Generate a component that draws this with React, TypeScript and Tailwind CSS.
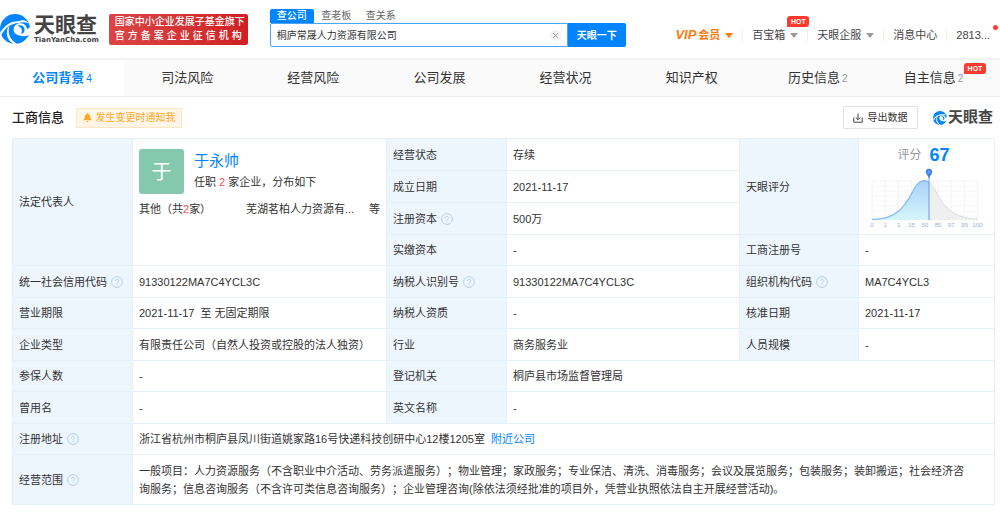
import React from 'react';
import { FaBell } from 'react-icons/fa';

const Swirl = ({ className }: { className: string }) => (
  <svg viewBox="0 0 30 30" className={className} aria-hidden="true">
    <circle cx="15" cy="15" r="15" fill="#0084ff" />
    {/* centre, open to the right */}
    <path d="M13.6 15.6 C13.6 11.4 17 8.8 21 9.2 C24.4 9.5 26.6 11.8 27 15 C28.4 14.6 29.4 13.8 30.4 12.4 L30.4 20 C28 22 24.6 22.8 21.4 22 C16.6 21.4 13.6 19.4 13.6 15.6 Z" fill="#fff" />
    <path d="M17.4 11.8 C21.4 10.4 24.6 12.4 24.6 16 C24.6 18.4 23 19.6 21 19.8 C22.6 18.2 22.6 13.4 17.4 11.8 Z" fill="#0084ff" />
    {/* outer sweeps */}
    <path d="M0 19 C4 11.6 10.4 7 18.4 7.2 C22.4 5.4 26.4 5.8 29 9.6 C25.4 7.8 21.8 8 18.6 9 C11.4 9.4 5 13.4 1.2 21.4 Z" fill="#fff" />
    <path d="M9.6 12.4 C7.2 18.6 9.6 25.6 17 30 L14.4 30.4 C7 26.4 5.4 19.4 8 13.6 Z" fill="#fff" />
  </svg>
);

const Help = () => (
  <svg viewBox="0 0 12 12" className="inline-block w-3 h-3 ml-1 align-[-2px]" fill="none" stroke="#a9ccec" aria-hidden="true">
    <circle cx="6" cy="6" r="5.4" strokeWidth="0.9" />
    <path d="M4.4 4.9 C4.4 2.6 7.6 2.7 7.6 4.7 C7.6 5.9 6 5.9 6 7.3 M6 8.3 V9.2" strokeWidth="0.9" />
  </svg>
);

const Caret = ({ className }: { className: string }) => (
  <svg viewBox="0 0 8 5" className={`w-2 h-[5px] ml-[5px] ${className}`} fill="currentColor" aria-hidden="true">
    <path d="M0 0 H8 L4 5 Z" />
  </svg>
);

const Hot = ({ className }: { className: string }) => (
  <span className={`absolute w-[22px] h-[11px] rounded-[3px] rounded-bl-none bg-[#ff3b30] text-white text-[7px] leading-[11px] font-bold text-center ${className}`}>
    HOT
  </span>
);

const ticks = ['0', '1', '3', '15', '50', '85', '97', '99', '100'];

const ScoreChart = () => (
  <svg viewBox="0 0 116 64" className="block w-[116px] h-16 ml-0.5" aria-label="天眼评分 67">
    <defs>
      <linearGradient id="fill" x1="0" y1="0" x2="0" y2="1">
        <stop offset="0" stopColor="#a9d2fa" />
        <stop offset="1" stopColor="#d5f5fc" />
      </linearGradient>
    </defs>
    {ticks.map((t, i) => (
      <path key={t} d={`M${5 + i * 13.2} 14 V53`} stroke="#f1f1f1" strokeWidth="0.8" />
    ))}
    {[14, 19, 24, 29, 34, 39, 44, 49].map((y) => (
      <path key={y} d={`M5 ${y} H110.6`} stroke="#f4f4f4" strokeWidth="0.8" />
    ))}
    <path d="M62 15.5 C72 21 72 51 110 52.2 V53 H62 Z" fill="#efefef" />
    <path d="M62 15.5 C72 21 72 51 110.6 52.2" fill="none" stroke="#dcdcdc" />
    <path d="M5 52.4 C46 53 42 13.6 57.5 13.6 C60 13.6 61 14.6 62 15.5 V53 H5 Z" fill="url(#fill)" />
    <path d="M5 52.4 C46 53 42 13.6 57.5 13.6 C60 13.6 61 14.6 62 15.5" fill="none" stroke="#84b9fa" strokeWidth="1.2" />
    <path d="M62 8 V53" stroke="#5d8ff0" strokeWidth="0.9" />
    <path d="M58.8 5 A3.2 3.2 0 0 1 65.2 5 C65.2 7.2 62.8 8.4 62 11.4 C61.2 8.4 58.8 7.2 58.8 5 Z" fill="#3f7df0" />
    <circle cx="62" cy="5" r="1.5" fill="#5bb0f8" />
    {ticks.map((t, i) => (
      <text key={t} x={5 + i * 13.2} y="60" fontSize="6" textAnchor="middle" fill="#94aee2">{t}</text>
    ))}
  </svg>
);

const menuTabs = [
  { name: '公司背景', count: 4, active: true },
  { name: '司法风险' },
  { name: '经营风险' },
  { name: '公司发展' },
  { name: '经营状况' },
  { name: '知识产权' },
  { name: '历史信息', count: 2 },
  { name: '自主信息', count: 2, hot: true },
];

function tabClass(active?: boolean, hot?: boolean) {
  if (active) return 'flex items-center justify-center bg-white font-bold text-[#0084ff]';
  if (hot) return 'relative flex items-center justify-center pr-3.5';
  return 'flex items-center justify-center';
}

const Label = ({ children, help, rowSpan }: { children: React.ReactNode; help?: boolean; rowSpan?: number }) => (
  <th scope="row" rowSpan={rowSpan} className="bg-[#eef6fd] border border-[#e4f0fa] pl-1.5 text-left font-normal whitespace-nowrap">
    {children}
    {help && <Help />}
  </th>
);

const Value = ({ children, colSpan, rowSpan, className = '' }: { children: React.ReactNode; colSpan?: number; rowSpan?: number; className?: string }) => (
  <td colSpan={colSpan} rowSpan={rowSpan} className={`border border-[#e4f0fa] pl-1.5 ${className}`}>
    {children}
  </td>
);

const Header = () => (
  <header className="flex items-center h-[60px] border-b-2 border-[#f2f2f2]">
    <a href="#" className="flex items-center shrink-0 text-[#444]">
      <Swirl className="w-[30px] h-[30px]" />
      <span className="flex flex-col ml-1">
        <span className="text-[21px] leading-[22px] font-bold">天眼查</span>
        <span className="font-['DejaVu_Sans'] text-[7px] leading-2 font-bold">TianYanCha.com</span>
      </span>
    </a>
    <div className="w-[139px] h-[31px] shrink-0 ml-2.5 px-1.5 py-px rounded-[2px] bg-linear-to-r from-[#dd4444] to-[#cf1f24] text-white text-[10px] leading-[14px] font-medium [text-align-last:justify]">
      <p className="whitespace-nowrap">国家中小企业发展子基金旗下</p>
      <p>官方备案企业征信机构</p>
    </div>

    {/* Search */}
    <form className="ml-[22px] w-[356px] -mt-0.5 text-[10px]">
      <div className="flex h-3.5 leading-[14px] text-[#666]">
        <button type="button" className="w-11 rounded-t-[2px] bg-[#0084ff] text-white font-medium">查公司</button>
        <button type="button" className="w-[45px]">查老板</button>
        <button type="button" className="w-11">查关系</button>
      </div>
      <div className="flex h-6">
        <div className="flex flex-1 items-center border border-[#4aa5fb] rounded-l-[2px] pl-1.5 pr-1.5">
          <input aria-label="查公司" defaultValue="桐庐常晟人力资源有限公司" className="flex-1 min-w-0 text-[#333] outline-none" />
          <button type="button" aria-label="清除" className="w-[11px] h-[11px] rounded-full bg-[#f2f2f2] p-[3px]">
            <svg viewBox="0 0 5 5" className="w-[5px] h-[5px]" stroke="#888" strokeWidth="0.8">
              <path d="M0 0 L5 5 M5 0 L0 5" />
            </svg>
          </button>
        </div>
        <button type="submit" className="w-[58px] rounded-r-[2px] bg-[#0084ff] text-white font-bold">天眼一下</button>
      </div>
    </form>

    <nav className="flex items-center ml-auto mt-3 text-[11px] leading-3 text-[#444] whitespace-nowrap divide-x divide-[#eee]">
      <a href="#" className="flex items-center px-[9px] font-bold text-[#ff7a14]">
        <span className="text-[13px] italic mr-0.5">VIP</span>会员
        <Caret className="text-[#ff7a14]" />
      </a>
      <a href="#" className="relative flex items-center px-[9px]">
        百宝箱
        <Caret className="text-[#999]" />
        <Hot className="-right-0.5 -top-[13px]" />
      </a>
      <a href="#" className="flex items-center px-[9px]">
        天眼企服
        <Caret className="text-[#999]" />
      </a>
      <a href="#" className="px-[9px]">消息中心</a>
      <a href="#" className="relative pl-[9px] pr-2.5">
        2813...
        <span className="absolute right-0.5 -top-1 w-[5px] h-[5px] rounded-full bg-[#ff3b30]" />
      </a>
    </nav>
  </header>
);

const App = () => {
  return (
    <div className="min-h-screen bg-white overflow-x-hidden text-[#333] font-['Liberation_Sans','Noto_Sans_CJK_SC',sans-serif]">
      <Header />

      <nav className="grid grid-cols-[124fr_repeat(6,126fr)_119fr] h-[37px] bg-[#fafafa] border-b border-[#eee] text-[13px]">
        {menuTabs.map((tab) => (
          <a key={tab.name} href="#" className={tabClass(tab.active, tab.hot)}>
            {tab.name}
            {tab.count && <span className={tab.active ? 'ml-0.5 text-[10px] font-normal' : 'ml-0.5 text-[10px] text-[#999]'}>{tab.count}</span>}
            {tab.hot && <Hot className="right-3.5 top-[3px]" />}
          </a>
        ))}
      </nav>

      <main className="pl-3 pr-[5px]">
        <div className="flex items-center h-[41px] pr-0.5">
          <h1 className="text-[13px] font-medium text-[#222]">工商信息</h1>
          <button className="flex items-center justify-center ml-3 w-[106px] h-5 bg-[#fff6e8] border border-[#ffe6c2] text-[10px] text-[#ffa726]">
            <FaBell size={9} className="mr-1" />
            发生变更时通知我
          </button>
          <button className="flex items-center justify-center ml-auto w-[75px] h-[23px] border border-[#e2e2e2] rounded-[1px] text-[10px]">
            <svg viewBox="0 0 10 10" className="w-2.5 h-2.5 mr-1" fill="none" stroke="#444" aria-hidden="true">
              <path d="M0.8 4.5 V9.2 H9.2 V4.5 M5 0.5 V6.6 M2.7 4.4 L5 6.7 L7.3 4.4" />
            </svg>
            导出数据
          </button>
          <span className="flex items-center ml-[15px] text-[15px] font-bold text-[#444]">
            <Swirl className="w-3.5 h-3.5 mr-px" />
            天眼查
          </span>
        </div>

        <table className="w-full table-fixed border-collapse text-[11px] leading-[18px] [text-spacing-trim:space-all]">
          <colgroup>
            <col className="w-[120px]" />
            <col />
            <col className="w-[120px]" />
            <col className="w-[233px]" />
            <col className="w-[119px]" />
            <col className="w-[136px]" />
          </colgroup>
          <tbody>
            <tr className="h-8">
              <Label rowSpan={4}>法定代表人</Label>
              <Value rowSpan={4} className="align-top pt-2.5 pr-1.5">
                <div className="flex">
                  <span className="flex items-center justify-center w-[45px] h-[45px] rounded-[3px] bg-[#84c9ae] text-white text-[20px]">于</span>
                  <div className="ml-2.5">
                    <a href="#" className="block text-[15px] leading-6 text-[#0084ff]">于永帅</a>
                    <p>任职 <span className="text-[#ff4b4b]">2</span> 家企业，分布如下</p>
                  </div>
                </div>
                <div className="flex mt-1.5">
                  <span className="w-[107px]">其他（共<span className="text-[#ff4b4b]">2</span>家）</span>
                  <a href="#">芜湖茗柏人力资源有...</a>
                  <span className="ml-auto">等</span>
                </div>
              </Value>
              <Label>经营状态</Label>
              <Value>存续</Value>
              <Label rowSpan={3}>天眼评分</Label>
              <Value rowSpan={3} className="align-top">
                <div className="flex items-center justify-center h-7 pt-1 pr-3 text-[12px] text-[#999]">
                  评分<strong className="ml-2 text-[18px] text-[#0084ff]">67</strong>
                </div>
                <ScoreChart />
              </Value>
            </tr>
            <tr className="h-8">
              <Label>成立日期</Label>
              <Value>2021-11-17</Value>
            </tr>
            <tr className="h-8">
              <Label help>注册资本</Label>
              <Value>500万</Value>
            </tr>
            <tr className="h-[31px]">
              <Label>实缴资本</Label>
              <Value>-</Value>
              <Label>工商注册号</Label>
              <Value>-</Value>
            </tr>
            <tr className="h-8">
              <Label help>统一社会信用代码</Label>
              <Value>91330122MA7C4YCL3C</Value>
              <Label help>纳税人识别号</Label>
              <Value>91330122MA7C4YCL3C</Value>
              <Label help>组织机构代码</Label>
              <Value>MA7C4YCL3</Value>
            </tr>
            <tr className="h-[31px]">
              <Label>营业期限</Label>
              <Value>2021-11-17 &nbsp;至 无固定期限</Value>
              <Label>纳税人资质</Label>
              <Value>-</Value>
              <Label>核准日期</Label>
              <Value>2021-11-17</Value>
            </tr>
            <tr className="h-8">
              <Label>企业类型</Label>
              <Value>有限责任公司（自然人投资或控股的法人独资）</Value>
              <Label>行业</Label>
              <Value>商务服务业</Value>
              <Label>人员规模</Label>
              <Value>-</Value>
            </tr>
            <tr className="h-[31px]">
              <Label>参保人数</Label>
              <Value>-</Value>
              <Label>登记机关</Label>
              <Value colSpan={3}>桐庐县市场监督管理局</Value>
            </tr>
            <tr className="h-8">
              <Label>曾用名</Label>
              <Value>-</Value>
              <Label>英文名称</Label>
              <Value colSpan={3}>-</Value>
            </tr>
            <tr className="h-[31px]">
              <Label help>注册地址</Label>
              <Value colSpan={5}>
                浙江省杭州市桐庐县凤川街道姚家路16号快递科技创研中心12楼1205室
                <a href="#" className="ml-1.5 text-[#0084ff]">附近公司</a>
              </Value>
            </tr>
            <tr className="h-[50px]">
              <Label help>经营范围</Label>
              <Value colSpan={5} className="pr-6">
                一般项目：人力资源服务（不含职业中介活动、劳务派遣服务）；物业管理；家政服务；专业保洁、清洗、消毒服务；会议及展览服务；包装服务；装卸搬运；社会经济咨询服务；信息咨询服务（不含许可类信息咨询服务）；企业管理咨询(除依法须经批准的项目外，凭营业执照依法自主开展经营活动)。
              </Value>
            </tr>
          </tbody>
        </table>
      </main>
    </div>
  );
};

export default App;
